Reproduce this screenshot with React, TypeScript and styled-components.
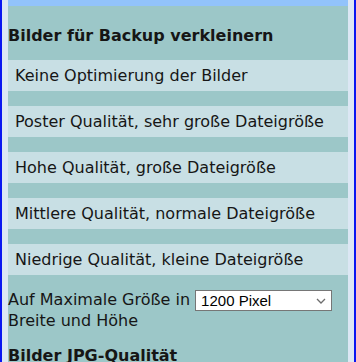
import React from "react";
import styled, { createGlobalStyle } from "styled-components";

const Global = createGlobalStyle`
  html, body { margin: 0; padding: 0; background: #dce7f4; }
  body { font-family: "DejaVu Sans", Verdana, sans-serif; color: #161616; }
`;

const Frame = styled.div`
  height: 362px;
  overflow: hidden;
  border-left: 2px solid #0a16f0;
  border-right: 2px solid #0a16f0;
  background: #dce7f4;
  padding: 0 6px;
`;

const Column = styled.div`
  background: #9cc7c8;
  height: 100%;
  display: flex;
  flex-direction: column;
`;

const TopBar = styled.div`
  height: 6px;
  flex: none;
  background: #92c3fb;
`;

const Heading = styled.h3<{ $top: number; $bottom: number }>`
  margin: 0;
  flex: none;
  padding: ${(p) => p.$top}px 0 ${(p) => p.$bottom}px;
  font-size: 16px;
  line-height: 20px;
  font-weight: bold;
  white-space: nowrap;
`;

const Options = styled.div`
  display: flex;
  flex-direction: column;
  flex: none;
  gap: 15px;
`;

const OptionRow = styled.div`
  background: #c8dfe4;
  height: 31px;
  box-sizing: border-box;
  padding: 6px 7px 5px;
  font-size: 16px;
  line-height: 20px;
  white-space: nowrap;
`;

const SizeLine = styled.div`
  flex: none;
  padding-top: 15px;
  font-size: 16px;
  line-height: 20px;
`;

const SelectWrap = styled.span`
  position: relative;
  display: inline-block;
  vertical-align: top;
  margin-left: 5px;
`;

const Select = styled.select`
  appearance: none;
  -webkit-appearance: none;
  display: block;
  width: 137px;
  height: 21px;
  box-sizing: border-box;
  border: 1px solid #767676;
  border-radius: 0;
  background: #fff;
  font-family: "Liberation Sans", Arial, sans-serif;
  font-size: 15px;
  padding: 0 0 0 5px;
  color: #000;
  outline: none;
`;

const Chevron = styled.svg`
  position: absolute;
  right: 6px;
  top: 8px;
  pointer-events: none;
`;

export default function App() {
  return (
    <>
      <Global />
      <Frame>
        <Column>
          <TopBar />
          <Heading $top={20} $bottom={14}>Bilder für Backup verkleinern</Heading>
          <Options>
            <OptionRow>Keine Optimierung der Bilder</OptionRow>
            <OptionRow>Poster Qualität, sehr große Dateigröße</OptionRow>
            <OptionRow>Hohe Qualität, große Dateigröße</OptionRow>
            <OptionRow>Mittlere Qualität, normale Dateigröße</OptionRow>
            <OptionRow>Niedrige Qualität, kleine Dateigröße</OptionRow>
          </Options>
          <SizeLine>
            Auf Maximale Größe in
            <SelectWrap>
              <Select defaultValue="1200">
                <option value="800">800 Pixel</option>
                <option value="1200">1200 Pixel</option>
                <option value="1600">1600 Pixel</option>
              </Select>
              <Chevron width="10" height="6" viewBox="0 0 10 6">
                <path d="M1 1 L5 5 L9 1" fill="none" stroke="#6d6d6d" strokeWidth="1.3" />
              </Chevron>
            </SelectWrap>
            <br />
            Breite und Höhe
          </SizeLine>
          <Heading $top={15} $bottom={0}>Bilder JPG-Qualität</Heading>
        </Column>
      </Frame>
    </>
  );
}
